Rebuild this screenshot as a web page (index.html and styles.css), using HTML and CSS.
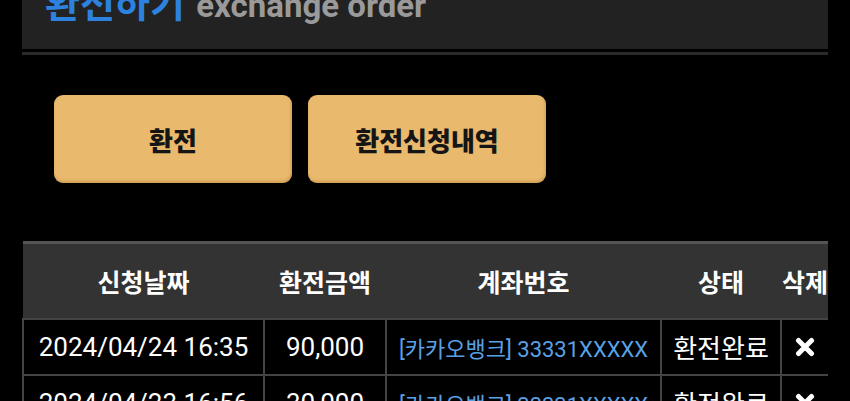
FILE: index.html
```html
<!DOCTYPE html>
<html lang="ko">
<head>
<meta charset="utf-8">
<link rel="stylesheet" href="styles.css">
</head>
<body>
<div class="page">
  <div class="panel">
    <h1 class="title"><span class="title-ko">환전하기</span> <span class="title-en">exchange order</span></h1>
  </div>
  <div class="rule"></div>
  <div class="actions">
    <button class="btn">환전</button>
    <button class="btn">환전신청내역</button>
  </div>
  <div class="table-wrap">
    <table class="orders">
      <colgroup>
        <col class="c-date"><col class="c-amt"><col class="c-acct"><col class="c-state"><col class="c-del">
      </colgroup>
      <thead>
        <tr><th>신청날짜</th><th>환전금액</th><th>계좌번호</th><th>상태</th><th>삭제</th></tr>
      </thead>
      <tbody>
        <tr>
          <td>2024/04/24 16:35</td><td>90,000</td><td class="acct">[카카오뱅크] 33331XXXXX</td><td>환전완료</td>
          <td><svg class="x" viewBox="0 0 20 20" width="20" height="20"><path d="M3.5 3.5 L16.5 16.5 M16.5 3.5 L3.5 16.5" stroke="#fff" stroke-width="5" stroke-linecap="round"/></svg></td>
        </tr>
        <tr>
          <td>2024/04/23 16:56</td><td>30,000</td><td class="acct">[카카오뱅크] 33331XXXXX</td><td>환전완료</td>
          <td><svg class="x" viewBox="0 0 20 20" width="20" height="20"><path d="M3.5 3.5 L16.5 16.5 M16.5 3.5 L3.5 16.5" stroke="#fff" stroke-width="5" stroke-linecap="round"/></svg></td>
        </tr>
      </tbody>
    </table>
  </div>
</div>
</body>
</html>
```

FILE: styles.css
```css
* { box-sizing: border-box; }
html, body { margin: 0; padding: 0; background: #000; overflow: hidden; }
body { font-family: Roboto, "Noto Sans CJK KR", sans-serif; color: #fff; }
.page { padding: 0 22px; }
.panel {
  background: #222;
  margin-top: -20px;
  height: 69px;
  padding: 0 0 0 23px;
}
.title { margin: 0; font-size: 38px; line-height: 48px; font-weight: 700; white-space: nowrap; }
.title-ko { color: #2d82e0; }
.title-en { color: #9a9a9a; font-size: 33px; margin-left: 2px; }
.rule { height: 3px; background: #2a2a2a; margin-top: 3px; }
.actions { display: flex; gap: 16px; padding: 40px 0 0 32px; }
.btn {
  width: 238px; height: 88px;
  background: #e9b96d;
  border: none; border-radius: 9px;
  box-shadow: inset -1px -2px 3px rgba(150,100,30,0.3), 0 1px 3px rgba(0,0,0,0.6);
  font-family: Roboto, "Noto Sans CJK KR", sans-serif;
  font-size: 26px; font-weight: 900; color: #151515;
}
.table-wrap { margin-top: 58px; overflow: hidden; }
.orders { width: 806px; border-collapse: collapse; table-layout: fixed; }
.c-date { width: 241px; } .c-amt { width: 122px; } .c-acct { width: 275px; } .c-state { width: 120px; } .c-del { width: 48px; }
.orders th {
  background: #333; border-top: 3px solid #555;
  height: 76px; font-size: 25px; font-weight: 700; text-align: center; padding: 0; white-space: nowrap;
}
.orders td {
  border: 2px solid #444; height: 56px; text-align: center; font-size: 26px; padding: 0; white-space: nowrap;
}
.orders td.acct { color: #5aa0e4; font-size: 22px; }
.x { display: block; margin: 0 auto; }
```
